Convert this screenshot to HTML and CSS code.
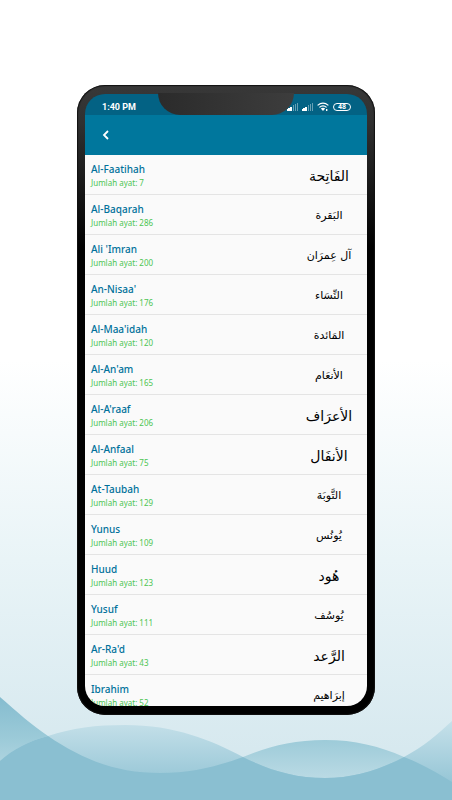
FILE: index.html
```html
<!DOCTYPE html>
<html lang="id">
<head>
<meta charset="UTF-8">
<meta name="viewport" content="width=device-width, initial-scale=1">
<title>Daftar Surat</title>
<link rel="stylesheet" href="styles.css">
</head>
<body>
<svg class="waves" viewBox="0 0 452 140" preserveAspectRatio="none" aria-hidden="true">
<defs>
<linearGradient id="fadeA" gradientUnits="userSpaceOnUse" x1="0" y1="37" x2="0" y2="118"><stop offset="0" stop-color="#85bccf"/><stop offset=".5" stop-color="#9bcad8"/><stop offset="1" stop-color="#badae4"/></linearGradient>
<linearGradient id="fadeB" gradientUnits="userSpaceOnUse" x1="0" y1="62" x2="0" y2="120"><stop offset="0" stop-color="#c5e0e9"/><stop offset="1" stop-color="#98c7d7"/></linearGradient>
<clipPath id="clipA"><path d="M0 37C17 52 33 66 48 76C82 99 115 113 160 113C193 113 218 106 243 97C268 87 292 80 325 80C355 80 379 86 404 97C420 103 436 112 452 122V140H0Z"/></clipPath>
</defs>
<path fill="url(#fadeA)" d="M0 37C17 52 33 66 48 76C82 99 115 113 160 113C193 113 218 106 243 97C268 87 292 80 325 80C355 80 379 86 404 97C420 103 436 112 452 122V140H0Z"/>
<path fill="url(#fadeB)" d="M0 101C13 89 29 81 48 76C72 68 96 65 125 65C175 65 211 80 243 97C269 110 294 118 325 118C354 118 379 110 404 97C423 87 438 74 452 61V140H0Z"/>
<path fill="#8abfd1" clip-path="url(#clipA)" d="M0 101C13 89 29 81 48 76C72 68 96 65 125 65C175 65 211 80 243 97C269 110 294 118 325 118C354 118 379 110 404 97C423 87 438 74 452 61V140H0Z"/>
</svg>

<main class="phone">
<div class="notch"></div>
<div class="screen">
<div class="status">
<span class="time">1:40 PM</span>
<svg class="signal" viewBox="0 0 11 8"><path fill="#fff" d="M0 6h1v2H0zM1 5h2v3H1zM3 4h2v4H3z"/><path fill="#fff" opacity=".4" d="M6 2h1v6H6zM8 1h1v7H8zM10 0h1v8h-1z"/></svg>
<svg class="signal" viewBox="0 0 11 8"><path fill="#fff" d="M0 6h1v2H0zM1 5h2v3H1zM3 4h2v4H3z"/><path fill="#fff" opacity=".4" d="M6 2h1v6H6zM8 1h1v7H8zM10 0h1v8h-1z"/></svg>
<svg class="wifi" viewBox="0 0 12 10"><g fill="none" stroke="#fff" stroke-width="1.2"><path d="M.6 3.4Q6-1.2 11.4 3.4M2.4 5.4Q6 2.2 9.6 5.4"/></g><path fill="#fff" d="M3.8 6.6Q6 5 8.2 6.6L6 9zM9 7h1.4v2H9z"/></svg>
<span class="battery">48</span>
</div>
<header class="bar">
<button class="back" type="button" aria-label="Kembali"><svg viewBox="0 0 8 10"><path d="M6 1L2 5l4 4" fill="none" stroke="#fff" stroke-width="1.8"/></svg></button>
</header>
<ul class="list">
<li class="row"><div><h2>Al-Faatihah</h2><p>Jumlah ayat: 7</p></div><span class="arab" lang="ar" dir="rtl">الفَاتِحة</span></li>
<li class="row"><div><h2>Al-Baqarah</h2><p>Jumlah ayat: 286</p></div><span class="arab small" lang="ar" dir="rtl">البَقرة</span></li>
<li class="row"><div><h2>Ali 'Imran</h2><p>Jumlah ayat: 200</p></div><span class="arab small" lang="ar" dir="rtl">آل عِمرَان</span></li>
<li class="row"><div><h2>An-Nisaa'</h2><p>Jumlah ayat: 176</p></div><span class="arab small" lang="ar" dir="rtl">النِّسَاء</span></li>
<li class="row"><div><h2>Al-Maa'idah</h2><p>Jumlah ayat: 120</p></div><span class="arab small" lang="ar" dir="rtl">المَائدة</span></li>
<li class="row"><div><h2>Al-An'am</h2><p>Jumlah ayat: 165</p></div><span class="arab small" lang="ar" dir="rtl">الأنعَام</span></li>
<li class="row"><div><h2>Al-A'raaf</h2><p>Jumlah ayat: 206</p></div><span class="arab" lang="ar" dir="rtl">الأعرَاف</span></li>
<li class="row"><div><h2>Al-Anfaal</h2><p>Jumlah ayat: 75</p></div><span class="arab" lang="ar" dir="rtl">الأنفَال</span></li>
<li class="row"><div><h2>At-Taubah</h2><p>Jumlah ayat: 129</p></div><span class="arab small" lang="ar" dir="rtl">التَّوبَة</span></li>
<li class="row"><div><h2>Yunus</h2><p>Jumlah ayat: 109</p></div><span class="arab small" lang="ar" dir="rtl">يُونُس</span></li>
<li class="row"><div><h2>Huud</h2><p>Jumlah ayat: 123</p></div><span class="arab" lang="ar" dir="rtl">هُود</span></li>
<li class="row"><div><h2>Yusuf</h2><p>Jumlah ayat: 111</p></div><span class="arab small" lang="ar" dir="rtl">يُوسُف</span></li>
<li class="row"><div><h2>Ar-Ra'd</h2><p>Jumlah ayat: 43</p></div><span class="arab" lang="ar" dir="rtl">الرَّعد</span></li>
<li class="row"><div><h2>Ibrahim</h2><p>Jumlah ayat: 52</p></div><span class="arab small" lang="ar" dir="rtl">إبرَاهيم</span></li>
</ul>
</div>
</main>
</body>
</html>
```
FILE: styles.css
```css
*{box-sizing:border-box;margin:0;padding:0;}
body{display:flex;flex-direction:column;height:100vh;padding:85px 77px;font-family:"Noto Sans","Open Sans",sans-serif;background:linear-gradient(#fff 0,#fff 45%,#e9f4f7 70%,#d2e6ed 100%);}
.waves{position:absolute;left:0;bottom:0;width:100%;height:140px;z-index:-1;}
.phone{position:relative;flex:1;display:flex;min-height:0;padding:9px 8px;border-radius:28px;background:linear-gradient(#383838 0,#303030 6%,#000 26%);box-shadow:inset 0 0 1px 1px #111;}
.notch{position:absolute;z-index:1;top:8px;left:81px;right:81px;height:22px;border-radius:0 0 22px 22px;background:linear-gradient(90deg,#2b2b2b,#3d3d3d);}
.screen{flex:1;display:flex;flex-direction:column;min-width:0;overflow:hidden;border-radius:20px;}
.status{display:flex;flex:none;align-items:center;height:21px;padding:4px 16px 0 17px;gap:4px;background:#036284;color:#fff;}
.time{margin-right:auto;font:bold 9px Roboto,sans-serif;}
.signal{width:11px;height:8px;}
.wifi{width:12px;height:10px;}
.battery{width:18px;height:8px;border:1px solid #fff;border-radius:4px;font:bold 7px/6px Roboto,sans-serif;text-align:center;}
.bar{display:flex;flex:none;align-items:center;height:40px;padding:0 13px;background:#00779d;}
.back{display:flex;align-items:center;justify-content:center;width:16px;height:24px;border:0;background:none;cursor:pointer;}
.back svg{width:8px;height:10px;}
.list{flex:1;min-height:0;overflow:hidden;list-style:none;background:#fafafa;}
.row{display:flex;align-items:center;justify-content:space-between;height:40px;padding:3px 0 0 6px;border-bottom:1px solid #e4e4e4;}
.row h2{font-size:10px;font-weight:500;line-height:14px;color:#00719a;}
.row p{font-size:8px;line-height:14px;color:#4cc552;}
.arab{width:76px;text-align:center;white-space:nowrap;font-family:"DejaVu Sans",sans-serif;font-size:14px;line-height:24px;color:#000;}
.small{font-size:11px;}
```
